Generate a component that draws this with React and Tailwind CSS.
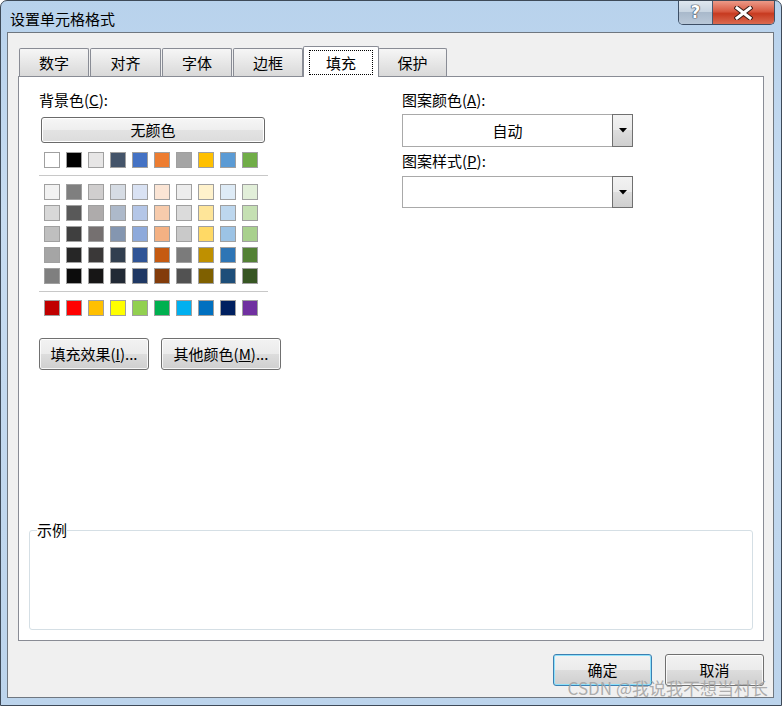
import React from "react";

const THEME = ["#ffffff", "#000000", "#e7e6e6", "#44546a", "#4472c4", "#ed7d31", "#a5a5a5", "#ffc000", "#5b9bd5", "#70ad47"];
const TINTS = [
  ["#f2f2f2", "#7f7f7f", "#d0cece", "#d6dce4", "#d9e2f3", "#fbe5d5", "#ededed", "#fff2cc", "#deebf6", "#e2efd9"],
  ["#d8d8d8", "#595959", "#aeabab", "#adb9ca", "#b4c6e7", "#f7cbac", "#dbdbdb", "#fee599", "#bdd7ee", "#c5e0b3"],
  ["#bfbfbf", "#3f3f3f", "#757070", "#8496b0", "#8eaadb", "#f4b183", "#c9c9c9", "#ffd965", "#9cc3e5", "#a8d08d"],
  ["#a5a5a5", "#262626", "#3a3838", "#323f4f", "#2f5496", "#c55a11", "#7b7b7b", "#bf9000", "#2e75b5", "#538135"],
  ["#7f7f7f", "#0c0c0c", "#171616", "#222a35", "#1f3864", "#833c0b", "#525252", "#7f6000", "#1e4e79", "#375623"],
];
const STANDARD = ["#c00000", "#ff0000", "#ffc000", "#ffff00", "#92d050", "#00b050", "#00b0f0", "#0070c0", "#002060", "#7030a0"];

const FONT = "font-['Microsoft_YaHei','Noto_Sans_CJK_SC',sans-serif]";

function Swatch({ color }) {
  return <div className="w-[16px] h-[16px] border border-[#a0a0a0]" style={{ background: color }} />;
}

function SwatchRow({ colors }) {
  return (
    <div className="flex gap-[6px]">
      {colors.map((c, i) => (
        <Swatch key={i} color={c} />
      ))}
    </div>
  );
}

function WinButton({ children, className = "", primary = false }) {
  return (
    <button
      className={`h-[32px] rounded-[3px] border text-[15px] leading-[20px] text-black bg-[linear-gradient(to_bottom,#f2f2f2_0%,#ebebeb_50%,#dddddd_50%,#cfcfcf_100%)] ${
        primary ? "border-[#3c7fb1] shadow-[inset_0_0_0_1px_#8ee1fb]" : "border-[#707070] shadow-[inset_0_0_0_1px_rgba(255,255,255,0.8)]"
      } ${className}`}
    >
      {children}
    </button>
  );
}

function Dropdown({ value, className = "" }) {
  return (
    <div className={`flex w-[231px] ${className}`}>
      <div className="flex-1 flex items-center justify-center border-y border-l border-[#a9a9a9] bg-white text-[15px] leading-[20px]">
        {value}
      </div>
      <div className="w-[21px] flex items-center justify-center border border-[#707070] bg-[linear-gradient(to_bottom,#f2f2f2_0%,#ebebeb_50%,#dddddd_50%,#cfcfcf_100%)]">
        <svg width="8" height="5" viewBox="0 0 8 5">
          <path d="M0 0h8L4 4.5z" fill="#000" />
        </svg>
      </div>
    </div>
  );
}

function Tab({ label, width, selected = false, className = "" }) {
  if (selected) {
    return (
      <div
        className={`relative z-10 h-[31px] mb-[-1px] bg-white border-t border-x border-[#898c95] rounded-t-[2px] flex items-start justify-center pt-[3px] ${className}`}
        style={{ width }}
      >
        <div className="border border-dotted border-black px-[16px] h-[25px] flex items-center leading-[20px]">{label}</div>
      </div>
    );
  }
  return (
    <div
      className={`h-[28px] border-t border-x border-[#898c95] rounded-t-[2px] bg-gradient-to-b from-[#f6f6f6] to-[#d9d9d9] flex items-center justify-center leading-[20px] ${className}`}
      style={{ width }}
    >
      {label}
    </div>
  );
}

export default function App() {
  return (
    <div className={`w-[782px] h-[706px] bg-white ${FONT} text-[15px] text-black relative`}>
      {/* window frame */}
      <div className="w-full h-full flex flex-col rounded-t-[7px] border border-[#3e4a58] bg-[linear-gradient(to_bottom,#b8d2ec_0%,#c7dcf1_30%,#bcd4ec_100%)]">
        {/* title bar */}
        <div className="h-[31px] flex items-start">
          <div className="pl-[9px] pt-[8px] leading-[20px] text-[15px] text-black">设置单元格格式</div>
          <div className="ml-auto mr-[6px] flex h-[24px] rounded-b-[5px] border border-t-0 border-[#3d4f66] overflow-hidden">
            <div className="w-[34px] flex items-center justify-center border-r border-[#4a5a70] bg-[linear-gradient(to_bottom,#dfe7ef_0%,#c6d3e0_50%,#a9b9cb_50%,#b9c8d8_100%)]">
              <span className="font-['DejaVu_Sans',sans-serif] font-bold text-[17px] leading-none text-white [text-shadow:0_0_1px_#2a3340,0_0_1px_#2a3340,0_0_1px_#2a3340]">?</span>
            </div>
            <div className="w-[61px] flex items-center justify-center bg-[linear-gradient(to_bottom,#ec9a88_0%,#d85a42_45%,#c73a20_55%,#da6a50_100%)]">
              <svg width="19" height="14" viewBox="0 0 19 14">
                <path d="M3 2l13 10M16 2L3 12" stroke="#3a1e18" strokeWidth="5" strokeLinecap="square" />
                <path d="M3 2l13 10M16 2L3 12" stroke="#ffffff" strokeWidth="3" strokeLinecap="square" />
              </svg>
            </div>
          </div>
        </div>

        {/* client area */}
        <div className="ml-[6px] mr-[7px] mb-[7px] flex-1 border border-[#6f7780] bg-[#f0f0f0] flex flex-col">
          {/* tabs */}
          <div className="pt-[13px] pl-[11px] flex items-end h-[43px]">
            <Tab label="数字" width={70} />
            <Tab label="对齐" width={71} className="ml-[1px]" />
            <Tab label="字体" width={70} className="ml-[1px]" />
            <Tab label="边框" width={70} className="ml-[1px]" />
            <Tab label="填充" width={76} selected />
            <Tab label="保护" width={69} className="ml-[-1px]" />
          </div>

          {/* panel */}
          <div className="ml-[10px] w-[746px] h-[565px] border border-[#898c95] bg-white flex flex-col">
            <div className="flex">
              {/* left column */}
              <div className="w-[383px] pl-[20px] pt-[13px] flex flex-col">
                <div className="leading-[20px]">
                  背景色(<span className="underline">C</span>):
                </div>
                <div className="mt-[7px] ml-[2px] w-[224px] h-[26px] rounded-[3px] border border-[#6a6a6a] bg-[linear-gradient(to_bottom,#f6f6f6_0%,#eeeeee_50%,#e3e3e3_50%,#dcdcdc_100%)] shadow-[inset_0_0_0_1px_#ffffff] flex items-center justify-center leading-[20px]">
                  无颜色
                </div>
                <div className="mt-[9px] ml-[5px]">
                  <SwatchRow colors={THEME} />
                </div>
                <div className="mt-[7px] w-[229px] h-px bg-[#c8c8c8]" />
                <div className="mt-[8px] ml-[5px] flex flex-col gap-[5px]">
                  {TINTS.map((row, i) => (
                    <SwatchRow key={i} colors={row} />
                  ))}
                </div>
                <div className="mt-[7px] w-[229px] h-px bg-[#c8c8c8]" />
                <div className="mt-[8px] ml-[5px]">
                  <SwatchRow colors={STANDARD} />
                </div>
                <div className="mt-[22px] flex gap-[12px]">
                  <WinButton className="w-[110px]">
                    填充效果(<span className="underline">I</span>)...
                  </WinButton>
                  <WinButton className="w-[120px]">
                    其他颜色(<span className="underline">M</span>)...
                  </WinButton>
                </div>
              </div>

              {/* right column */}
              <div className="pt-[13px] flex flex-col">
                <div className="leading-[20px]">
                  图案颜色(<span className="underline">A</span>):
                </div>
                <Dropdown value="自动" className="mt-[4px] h-[33px]" />
                <div className="mt-[4px] leading-[20px]">
                  图案样式(<span className="underline">P</span>):
                </div>
                <Dropdown value="" className="mt-[5px] h-[32px]" />
              </div>
            </div>

            {/* sample */}
            <fieldset className="mt-auto mx-[10px] mb-[10px] h-[108px] border border-[#d5dfe5] rounded-[3px]">
              <legend className="ml-[7px] leading-[16px] text-[15px]">示例</legend>
            </fieldset>
          </div>

          {/* bottom buttons */}
          <div className="mt-[13px] pr-[9px] flex justify-end gap-[13px]">
            <WinButton primary className="w-[99px]">确定</WinButton>
            <WinButton className="w-[99px]">取消</WinButton>
          </div>
        </div>
      </div>

      {/* watermark */}
      <div className="absolute right-[14px] bottom-[7px] text-[17px] leading-[22px] text-[#a4a4a4]/90 font-['Noto_Sans_CJK_SC',sans-serif] pointer-events-none">
        CSDN @我说我不想当村长
      </div>
    </div>
  );
}
